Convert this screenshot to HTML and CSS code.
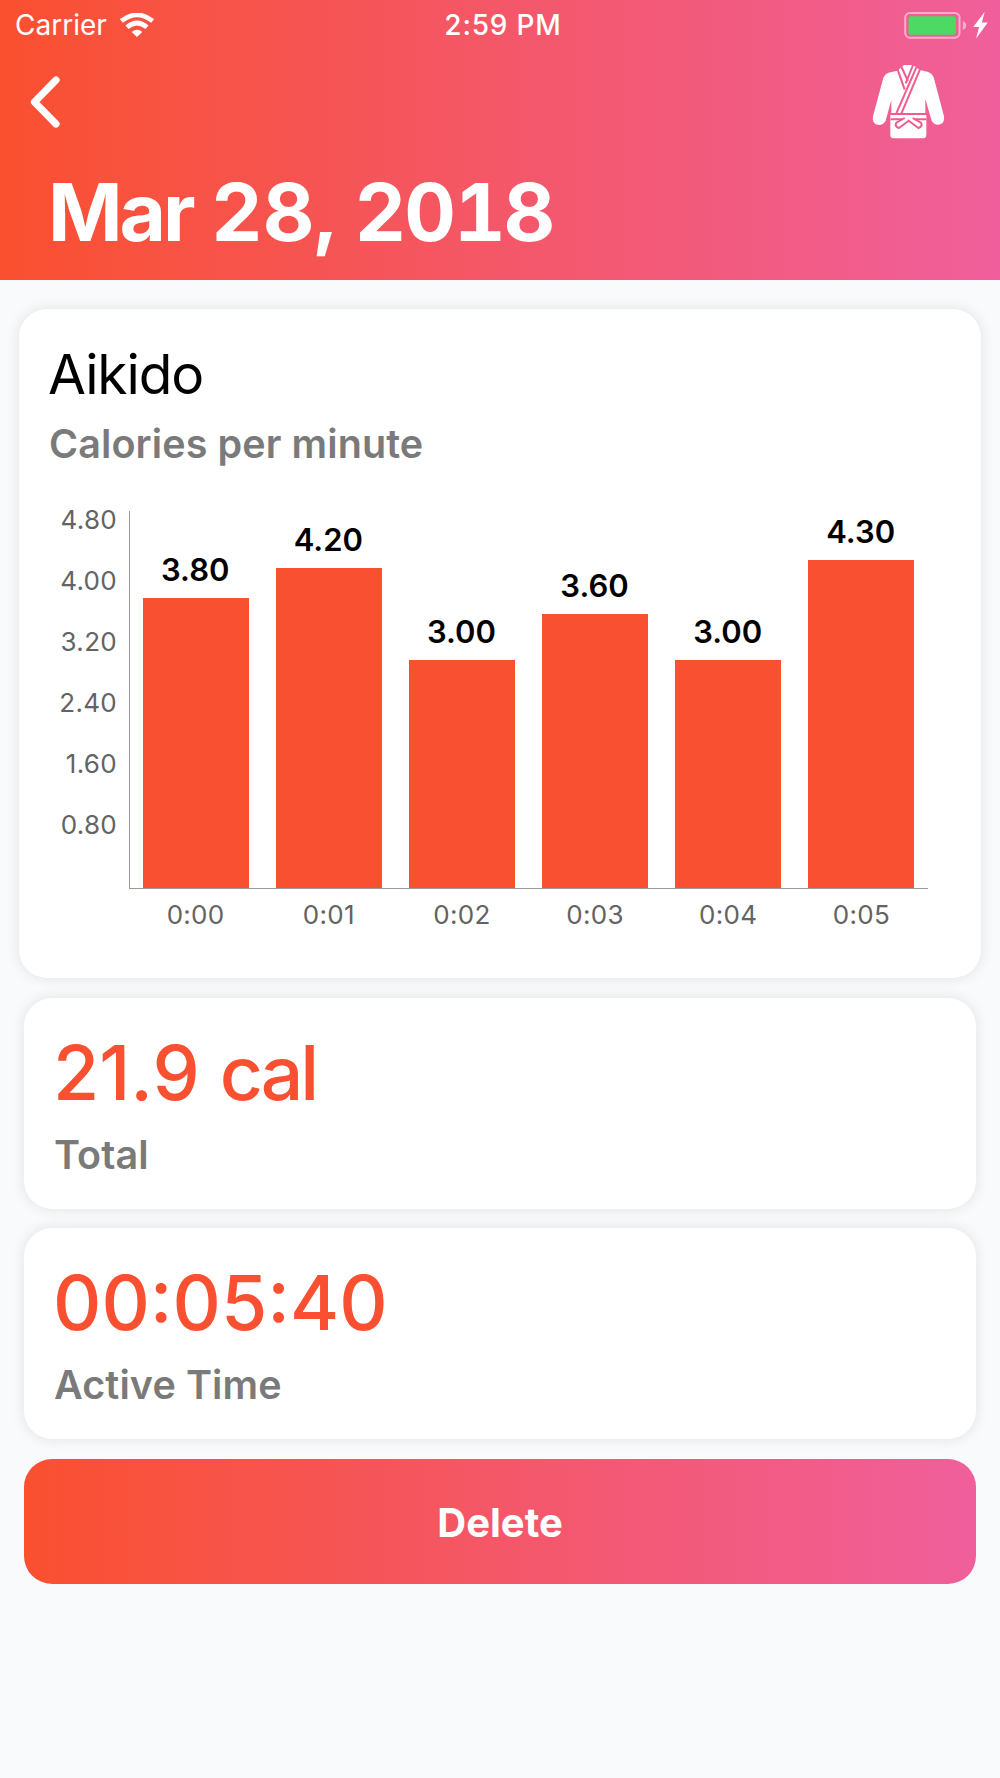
FILE: index.html
```html
<!DOCTYPE html>
<html lang="en">
<head>
  <meta charset="UTF-8" />
  <meta name="viewport" content="width=device-width, initial-scale=1.0"/>
  <title>Workout Details</title>
  <link rel="stylesheet" href="styles.css">
</head>
<body>

  <header class="header">
    <!-- status bar -->
    <div class="status-bar">
      <div class="status-left">
        <span class="carrier">Carrier</span>
        <svg class="wifi" viewBox="0 0 102 72">
          <path d="M51 72 L35 57 Q51 44 67 57 Z" fill="#fff"/>
          <path d="M21 43 Q51 17 81 43" fill="none" stroke="#fff" stroke-width="14"/>
          <path d="M4 24 Q51 -13 98 24" fill="none" stroke="#fff" stroke-width="14"/>
        </svg>
      </div>
      <span class="clock">2:59 PM</span>
      <div class="status-right">
        <svg class="battery" viewBox="0 0 190 82">
          <rect x="3" y="3" width="165" height="75" rx="14" fill="none" stroke="#fff" stroke-opacity=".5" stroke-width="6"/>
          <rect x="13" y="13" width="144" height="56" rx="7" fill="#4cd964"/>
          <path d="M178 27 Q188 31 188 41 Q188 51 178 55 Z" fill="#fff" fill-opacity=".5"/>
        </svg>
        <svg class="bolt" viewBox="0 0 42 78">
          <path d="M33 0 L0 43 H17 L8 77 L42 30 H25 Z" fill="#fff"/>
        </svg>
      </div>
    </div>

    <div class="nav">
      <svg class="back" viewBox="0 0 30 52">
        <path d="M26 4 L4.500 26 L26 48" fill="none" stroke="#fff" stroke-width="7.200" stroke-linecap="round" stroke-linejoin="round"/>
      </svg>
      <svg class="gi" viewBox="36 192 219 225">
        <path fill="#fff" d="M132 195 H158 L180 210 L205 216 Q216 220 221 232 L251 345 Q256 365 243 372 Q225 379 215 362 L196 297 V343 L199 346 V405 Q199 415 189 415 H101 Q91 415 91 405 V346 L94 343 V300 L77 362 Q66 380 48 373 Q36 366 39 349 L70 233 Q74 222 85 218 L112 212 Z"/>
        <g class="gi-lines">
          <path d="M112 206 L134 269"/>
          <path d="M123 198 L144 243"/>
          <path d="M180 208 L123 343"/>
          <path d="M169 202 L109 340"/>
          <path d="M159 195 L137 250"/>
          <path d="M92 342 H199 M92 358 H126 M164 358 H199"/>
          <path d="M134 354 L109 368 Q103 380 117 384 L146 362 L175 384 Q189 380 183 368 L158 354"/>
        </g>
      </svg>
    </div>

    <h1 class="date"><span class="month">Mar</span> 28, <span class="year">2018</span></h1>
  </header>

  <main class="content">
    <section class="card chart-card">
      <h2 class="activity">Aikido</h2>
      <p class="label">Calories per minute</p>

      <div class="chart">
        <div class="y-axis">
          <span>4.80</span>
          <span>4.00</span>
          <span>3.20</span>
          <span>2.40</span>
          <span>1.60</span>
          <span>0.80</span>
        </div>
        <div class="plot">
          <div class="column"><span class="value">3.80</span><div class="bar" style="height: 290px"></div></div>
          <div class="column"><span class="value">4.20</span><div class="bar" style="height: 320px"></div></div>
          <div class="column"><span class="value">3.00</span><div class="bar" style="height: 228px"></div></div>
          <div class="column"><span class="value">3.60</span><div class="bar" style="height: 274px"></div></div>
          <div class="column"><span class="value">3.00</span><div class="bar" style="height: 228px"></div></div>
          <div class="column"><span class="value">4.30</span><div class="bar" style="height: 328px"></div></div>
        </div>
        <div class="x-axis">
          <span>0:00</span>
          <span>0:01</span>
          <span>0:02</span>
          <span>0:03</span>
          <span>0:04</span>
          <span>0:05</span>
        </div>
      </div>
    </section>

    <section class="card stat">
      <div class="stat-value">21.9 <span class="unit">cal</span></div>
      <p class="label">Total</p>
    </section>

    <section class="card stat">
      <div class="stat-value">00:05:40</div>
      <p class="label">Active Time</p>
    </section>

    <button class="delete">Delete</button>
  </main>

</body>
</html>
```
FILE: styles.css
```css
* {
  box-sizing: border-box;
}

body {
  margin: 0;
  min-height: 1778px;
  background-color: #f9fafc;
  font-family: Inter, "Liberation Sans", sans-serif;
}

h1, h2, p {
  margin: 0;
}

svg {
  display: block;
}

.header {
  height: 280px;
  background: linear-gradient(to right, #fa5030, #f45768 50%, #f05f9b);
  color: white;
}

.status-bar {
  display: grid;
  grid-template-columns: 1fr auto 1fr;
  align-items: center;
  height: 50px;
  padding: 0 12px 0 15px;
  font-size: 28px;
}

.status-left, .status-right {
  display: flex;
  align-items: center;
}

.status-right {
  justify-content: flex-end;
  gap: 6px;
}

.wifi {
  width: 34px;
  height: 24px;
  margin-left: 13px;
}

.clock {
  padding-left: 3px;
  font-weight: 500;
  letter-spacing: 0.8px;
}

.battery {
  width: 63px;
  height: 27px;
}

.bolt {
  width: 15px;
  height: 27px;
}

.nav {
  display: flex;
  justify-content: space-between;
  height: 90px;
  padding: 14px 55px 0 30px;
}

.back {
  width: 30px;
  height: 52px;
  margin-top: 12px;
}

.gi {
  width: 73px;
  height: 75px;
}

.gi-lines {
  fill: none;
  stroke: #f05c8d;
  stroke-width: 6;
}

.date {
  padding-left: 48px;
  font-size: 80px;
  font-weight: 700;
  line-height: 144px;
  word-spacing: -3px;
  font-variant-numeric: tabular-nums;
}

.month {
  letter-spacing: -3px;
}

.year {
  letter-spacing: -2px;
}

.content {
  padding: 29px 24px 0;
}

.card {
  margin-bottom: 19.5px;
  background-color: white;
  border-radius: 28px;
  box-shadow: 0 0 14px rgba(0, 0, 0, 0.1);
}

.chart-card {
  height: 669px;
  margin: 0 -5px 19.5px;
  padding: 30px;
}

.activity {
  margin-left: -1px;
  font-size: 55px;
  font-weight: 400;
  line-height: 70px;
  letter-spacing: -1.1px;
}

.label {
  margin-top: 11px;
  color: #7a7a7a;
  font-size: 39.5px;
  font-weight: 600;
  line-height: 48px;
  letter-spacing: 0.1px;
}

.chart {
  display: grid;
  grid-template-columns: 80px 799px;
  margin-top: 43px;
}

.y-axis {
  display: flex;
  flex-direction: column;
  padding-right: 12px;
}

.y-axis span {
  height: 61px;
  line-height: 18px;
  text-align: right;
}

.y-axis, .x-axis {
  color: #636363;
  font-size: 26px;
  letter-spacing: 0.3px;
}

.plot {
  display: flex;
  align-items: flex-end;
  gap: 26.6px;
  height: 378px;
  padding: 0 13.5px 0 12.5px;
  border-left: 1px solid #999;
  border-bottom: 1px solid #999;
}

.column {
  flex: 1;
  text-align: center;
}

.value {
  display: block;
  margin-left: -1px;
  font-size: 31px;
  font-weight: 600;
  line-height: 57px;
}

.bar {
  background-color: #fa5032;
}

.x-axis {
  grid-column: 2;
  display: grid;
  grid-template-columns: repeat(6, 1fr);
  padding-top: 10px;
  text-align: center;
}

.stat {
  height: 211px;
  padding: 30px;
}

.stat-value {
  margin-left: -1px;
  color: #fa5032;
  font-size: 75px;
  font-weight: 500;
  line-height: 90px;
}

.stat .label {
  margin-top: 13px;
}

.unit {
  letter-spacing: -3px;
}

.delete {
  display: block;
  width: 100%;
  height: 125px;
  padding-top: 3px;
  border: none;
  border-radius: 28px;
  background: linear-gradient(to right, #fa5030, #f45768 50%, #f05f9b);
  color: white;
  font-family: inherit;
  font-size: 40px;
  font-weight: 700;
}
```
